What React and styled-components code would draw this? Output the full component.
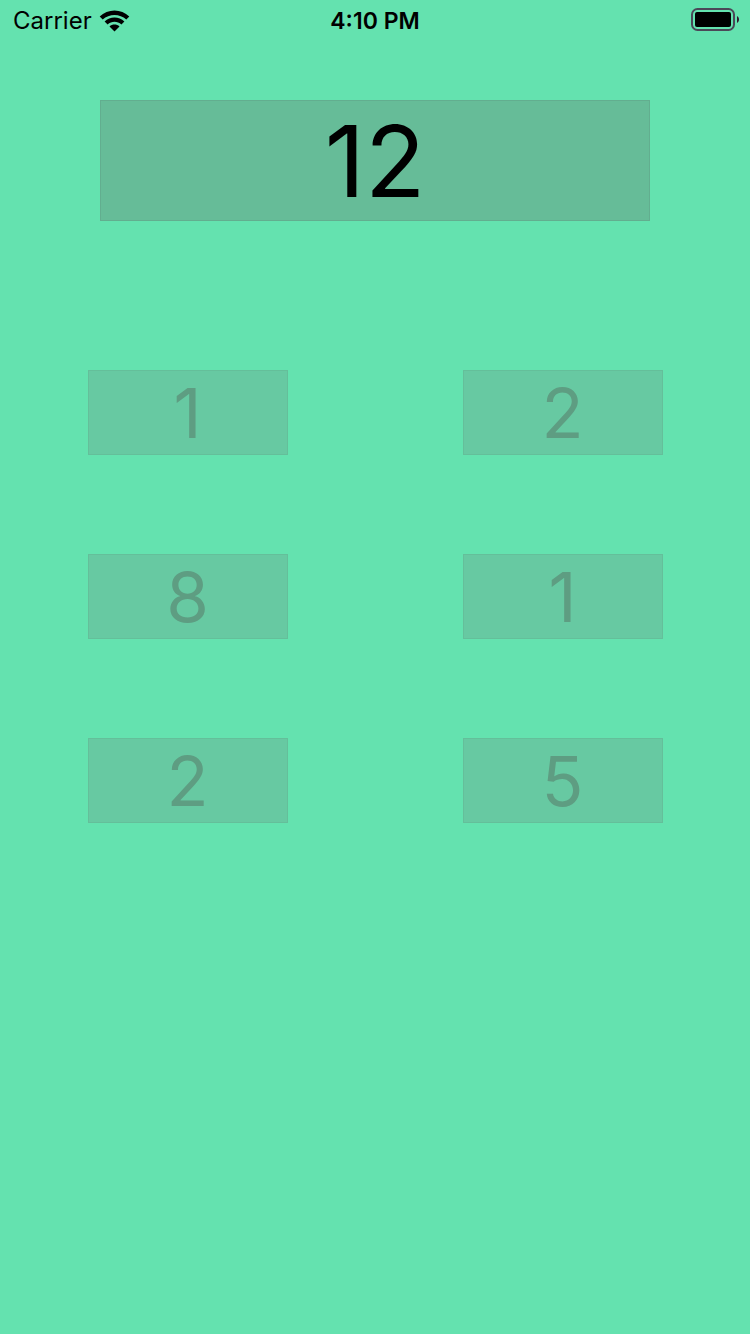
import React from "react";
import styled, { createGlobalStyle } from "styled-components";

const GlobalStyle = createGlobalStyle`
  * { box-sizing: border-box; }
  body {
    margin: 0;
    background: #64e2af;
    color: #000;
    font-family: Inter, "Liberation Sans", sans-serif;
  }
`;

const Screen = styled.div`
  min-height: 100vh;
  display: flex;
  flex-direction: column;
`;

const StatusBar = styled.header`
  display: grid;
  grid-template-columns: 1fr auto 1fr;
  align-items: center;
  height: 40px;
  padding: 0 10px;
  font-size: 23px;
  line-height: 42px;
`;

const Network = styled.div`
  display: flex;
  align-items: center;
  gap: 7px;
  padding-left: 3px;
  font-size: 24px;
`;

const Clock = styled.time`
  font-weight: 600;
`;

const Power = styled.div`
  display: flex;
  align-self: start;
  justify-content: flex-end;
  padding-top: 8px;
`;

const Icon = styled.svg`
  display: block;
  flex: none;
`;

const Game = styled.main`
  padding-top: 60px;
`;

const Target = styled.h1`
  margin: 0 100px;
  height: 121px;
  border: 1px solid #62ae8f;
  background: #66bc98;
  font-size: 99px;
  font-weight: 400;
  line-height: 120px;
  text-align: center;
`;

const Choices = styled.div`
  display: grid;
  grid-template-columns: 1fr 1fr;
  justify-items: center;
  row-gap: 99px;
  margin-top: 149px;
`;

const Choice = styled.button`
  width: 200px;
  height: 85px;
  padding: 1px 0 0;
  border: 1px solid #64bf9a;
  border-radius: 0;
  background: #67c9a2;
  color: #5e9d82;
  font-family: inherit;
  font-size: 69px;
  line-height: 83px;
  cursor: pointer;
`;

const numbers = [1, 2, 8, 1, 2, 5];

function WifiIcon() {
  return (
    <Icon width="31" height="24" viewBox="0 0 31 24" role="img" aria-label="Wi-Fi">
      <path d="M0.700 7.600C8.700-0.400 22.300-0.400 30.300 7.600L27.300 10.600C20.800 4.400 10.200 4.400 3.700 10.600Z" />
      <path d="M5.600 12.500C11 7.300 20 7.300 25.400 12.500L22.400 15.500C18.600 11.900 12.400 11.900 8.600 15.500Z" />
      <path d="M10.500 17.400C13.400 14.800 17.600 14.800 20.500 17.400L15.500 22.600Z" />
    </Icon>
  );
}

function BatteryIcon() {
  return (
    <Icon width="49" height="24" viewBox="0 0 49 24" role="img" aria-label="Battery full">
      <rect x="1" y="1" width="42" height="21" rx="5.500" fill="none" stroke="#4b4858" strokeWidth="2" />
      <rect x="4" y="4" width="36" height="15" rx="2" />
      <path d="M46 8C48.700 9.500 48.700 13.500 46 15Z" fill="#301b30" />
    </Icon>
  );
}

export default function App() {
  return (
    <Screen>
      <GlobalStyle />
      <StatusBar>
        <Network>
          <span>Carrier</span>
          <WifiIcon />
        </Network>
        <Clock>4:10 PM</Clock>
        <Power>
          <BatteryIcon />
        </Power>
      </StatusBar>
      <Game>
        <Target>12</Target>
        <Choices>
          {numbers.map((value, index) => (
            <Choice key={index} type="button">
              {value}
            </Choice>
          ))}
        </Choices>
      </Game>
    </Screen>
  );
}
